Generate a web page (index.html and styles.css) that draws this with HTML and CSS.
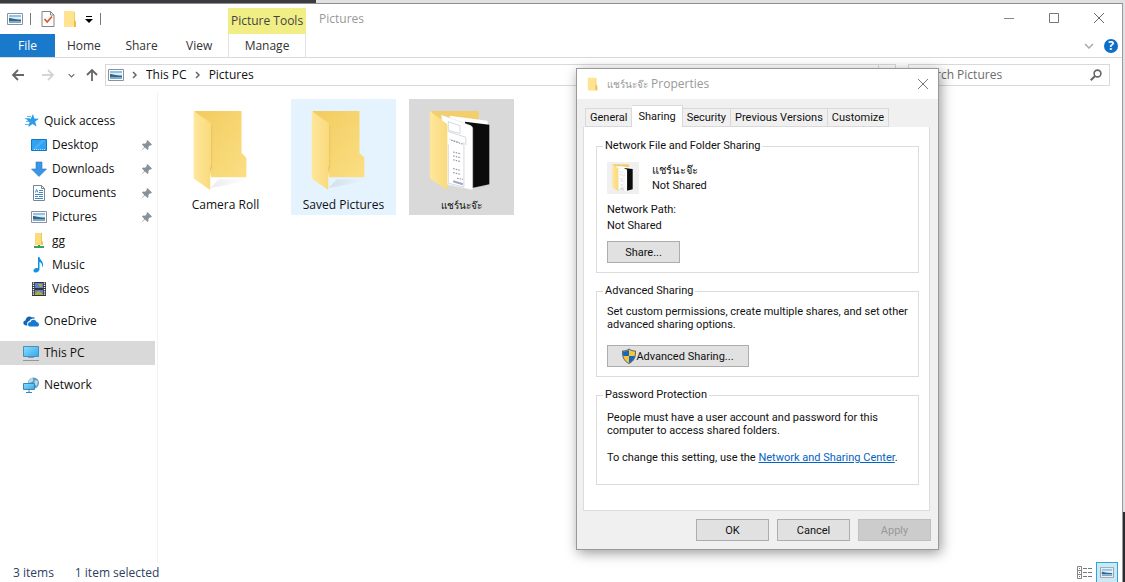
FILE: index.html
```html
<!DOCTYPE html>
<html lang="en">
<head>
<meta charset="utf-8">
<title>Pictures</title>
<link rel="stylesheet" href="styles.css">
</head>
<body>
<svg class="defs" aria-hidden="true">
  <defs>
    <linearGradient id="sky" x1="0" y1="0" x2="0" y2="1"><stop offset="0" stop-color="#7fb9ea"/><stop offset=".45" stop-color="#e3f2f4"/><stop offset=".55" stop-color="#3d6a83"/><stop offset="1" stop-color="#6ba0d2"/></linearGradient>
    <linearGradient id="back" x1="0" y1="0" x2="1" y2="1"><stop offset="0" stop-color="#f2cb5e"/><stop offset="1" stop-color="#fbdf84"/></linearGradient>
    <linearGradient id="front" x1="0" y1="0" x2="1" y2="0"><stop offset="0" stop-color="#ffe69b"/><stop offset="1" stop-color="#f9da7c"/></linearGradient>
    <linearGradient id="screen" x1="0" y1="0" x2="1" y2="1"><stop offset="0" stop-color="#8ddcff"/><stop offset="1" stop-color="#31a9ec"/></linearGradient>
    <linearGradient id="shade" x1="0" y1="0" x2="1" y2="0"><stop offset="0" stop-color="#000" stop-opacity=".22"/><stop offset="1" stop-color="#000" stop-opacity="0"/></linearGradient>
    <symbol id="i-picture" viewBox="0 0 16 12"><path fill="#fff" stroke="#8b9299" d="M.5.5h15v11H.5z"/><path fill="#8fc3ee" d="M2 2h12v3H2z"/><path fill="#dceff5" d="M2 4h12v3H2z"/><path fill="#3b667f" d="M2 5c3 0 5 1.500 12 1.500V8H2z"/><path fill="#78aad6" d="M2 8h12v2H2z"/></symbol>
    <symbol id="i-folder" viewBox="0 0 56 84"><path fill="url(#shade)" d="M17 80l9-9h26l3 1-22 5z" opacity=".35"/><path fill="url(#back)" d="M1 1h48v43l5 5v20H18L2 4z"/><path fill="url(#front)" d="M0 1l17 12q1 1 1 3v43l-1 3v20L1 71q-1-1-1-3z"/><path fill="#dcae42" opacity=".45" d="M18 16h1v43l-2 4v-4l1-2z"/></symbol>
    <symbol id="i-docs" viewBox="0 0 64 84"><path fill="url(#shade)" d="M44 80l12-3h8z"/><path fill="#f2cf6c" d="M1 1h49v30L20 66z"/><path fill="#fff" d="M20 6l39 5 1 6-20 40z"/><path fill="#0c0c0c" d="M36 12l25 3v61l-18 4z"/><path fill="#fff" stroke="#ddd" stroke-width=".5" d="M12 5l30 11q2 1 2 3v63L16 76z"/><path fill="none" stroke="#c3c8d0" stroke-width=".7" d="M19 12l12 4v8l-12-3zM19 22l18 6v8M19 35v40l16 4V33M20 30l10 3"/><path stroke="#8b9099" stroke-width="1.200" stroke-dasharray="1.500 1.200" fill="none" d="M24 43l8 2M24 47l8 2M24 51l8 2M24 60l8 2M24 64l8 2M28 70l6 1M22 31l12 4"/><path stroke="#9babc8" stroke-width="2" d="M24 73l10 3"/><path fill="url(#front)" d="M0 1l16 12q2 1 2 3v66L1 71q-1-1-1-3z"/></symbol>
    <symbol id="i-minifolder" viewBox="0 0 14 16"><path fill="#f3cc63" d="M3 1h9v10l1 1v4H3z"/><path fill="#ffe391" d="M1 0h10v16H1z"/><path fill="#e9bd50" d="M11 9h1l1 2v5h-2z"/></symbol>
    <symbol id="i-pin" viewBox="0 0 12 12"><path fill="#8a9299" d="M7 0l5 5-1.200 1-.8-.4L8 7.500l.2 2.200L7 11 4.300 8.300 0 12l3.600-4.400L1 5l1.300-1.200 2.200.2L6.500 2 6 1z"/></symbol>
    <symbol id="i-close" viewBox="0 0 12 12"><path fill="none" stroke="currentColor" d="M1 1l10 10M11 1L1 11"/></symbol>
    <symbol id="i-right" viewBox="0 0 6 8"><path fill="none" stroke="#666" stroke-width="1.500" d="M1 1l3 3-3 3"/></symbol>
    <symbol id="i-down" viewBox="0 0 10 6"><path fill="none" stroke="currentColor" stroke-width="1.500" d="M1 1l4 4 4-4"/></symbol>
    <symbol id="i-arrow" viewBox="0 0 14 12"><path fill="none" stroke="currentColor" stroke-width="1.800" d="M13 6H2M7 1L2 6l5 5"/></symbol>
  </defs>
</svg>

<div class="desktop">
  <main class="window">
    <header class="ribbon">
      <div class="quickbar">
        <svg class="pic" role="img" aria-label="Pictures"><use href="#i-picture"/></svg>
        <span class="rule"></span>
        <button class="plain" aria-label="Properties"><svg width="14" height="16" viewBox="0 0 14 16"><path fill="#fff" stroke="#858585" d="M1 .5h8.500L13 4v11.500H1z"/><path fill="none" stroke="#858585" d="M9.500.5V4H13"/><path fill="none" stroke="#dc5a2c" stroke-width="1.800" d="M3.500 8l2.700 3L11 5.500"/></svg></button>
        <button class="plain" aria-label="New folder"><svg width="14" height="16"><use href="#i-minifolder"/></svg></button>
        <button class="plain" aria-label="Customize Quick Access Toolbar"><svg width="8" height="7" viewBox="0 0 8 7"><path d="M1 0h6v1H1zM0 3h8L4 7z"/></svg></button>
        <span class="rule"></span>
      </div>
      <nav class="tabs">
        <button class="tab file">File</button>
        <button class="tab">Home</button>
        <button class="tab">Share</button>
        <button class="tab">View</button>
      </nav>
      <div class="context">
        <div class="context-name">Picture Tools</div>
        <button class="tab">Manage</button>
      </div>
      <div class="titlebar">
        <h1>Pictures</h1>
        <div class="controls">
          <button class="plain" aria-label="Minimize"><svg width="12" height="12" viewBox="0 0 12 12"><path stroke="#888" d="M1 6.500h10"/></svg></button>
          <button class="plain" aria-label="Maximize"><svg width="12" height="12" viewBox="0 0 12 12"><path fill="none" stroke="#777" d="M1.500 1.500h9v9h-9z"/></svg></button>
          <button class="plain" aria-label="Close"><svg width="12" height="12"><use href="#i-close"/></svg></button>
        </div>
      </div>
      <div class="ribbon-end">
        <button class="plain grey" aria-label="Expand the ribbon"><svg width="10" height="6"><use href="#i-down"/></svg></button>
        <button class="help" aria-label="Help">?</button>
      </div>
    </header>

    <div class="addressrow">
      <div class="arrows">
        <button class="plain" aria-label="Back"><svg width="14" height="12"><use href="#i-arrow"/></svg></button>
        <button class="plain off" aria-label="Forward"><svg width="14" height="12"><use href="#i-arrow" transform="rotate(180 7 6)"/></svg></button>
        <button class="plain" aria-label="Recent locations"><svg width="7" height="5"><use href="#i-down"/></svg></button>
        <button class="plain" aria-label="Up"><svg width="12" height="14" viewBox="0 0 12 14"><path fill="none" stroke="currentColor" stroke-width="1.800" d="M6 13V2M1 7l5-5 5 5"/></svg></button>
      </div>
      <div class="address">
        <svg class="pic"><use href="#i-picture"/></svg>
        <svg class="sep"><use href="#i-right"/></svg>
        <span>This PC</span>
        <svg class="sep"><use href="#i-right"/></svg>
        <span>Pictures</span>
        <button class="refresh" aria-label="Refresh"></button>
      </div>
      <label class="search">
        <input type="text" placeholder="Search Pictures" aria-label="Search Pictures">
        <svg width="12" height="12" viewBox="0 0 12 12"><circle cx="7.500" cy="4.500" r="3.400" fill="none" stroke="#666" stroke-width="1.600"/><path stroke="#666" stroke-width="2" d="M5 7L.8 11.200"/></svg>
      </label>
    </div>

    <div class="body">
      <nav class="tree">
        <ul>
          <li><svg class="ico" viewBox="0 0 16 16"><path fill="#2d9be8" d="M10 1l1.300 4.500 4.700.2-3.800 2.900 1.300 4.900-4-2.600-4.200 3 1.300-5L3 6.200l4.700-.5z"/><path stroke="#67b7ee" d="M4 3.500h4M2 5.500h5M3 8.500h3M2 11.500h4"/></svg>Quick access</li>
          <li class="sub"><svg class="ico" viewBox="0 0 16 16"><path fill="#2ea2f3" stroke="#1677bf" d="M.5 2.500h15v11H.5z"/><path fill="#5bbcff" opacity=".5" d="M11 3h4L4 13H1z"/><path stroke="#bfe4ff" stroke-dasharray="1 1" d="M3 12.500h11"/></svg>Desktop<svg class="pin"><use href="#i-pin"/></svg></li>
          <li class="sub"><svg class="ico" viewBox="0 0 16 16"><path fill="#3b94e6" stroke="#2b79c5" stroke-width=".6" d="M5 1h6v7h4.500L8 15.500.5 8H5z"/></svg>Downloads<svg class="pin"><use href="#i-pin"/></svg></li>
          <li class="sub"><svg class="ico" viewBox="0 0 16 16"><path fill="#fff" stroke="#7b858d" d="M2.500.5h8l3 3v12h-11z"/><path fill="none" stroke="#7b858d" d="M10.500.5v3h3"/><path fill="none" stroke="#3e89c8" d="M8 5.500h4M8 7.500h4M4 9.500h8M4 11.500h3M8 11.500h4M4 13.500h8M4.500 7.500l1-3 1.500 3"/></svg>Documents<svg class="pin"><use href="#i-pin"/></svg></li>
          <li class="sub"><svg class="ico" viewBox="0 0 16 16"><use href="#i-picture" y="2" width="16" height="12"/></svg>Pictures<svg class="pin"><use href="#i-pin"/></svg></li>
          <li class="sub"><svg class="ico" viewBox="0 0 16 16"><path fill="#f0c650" d="M4 0h7v8l1 1v3H4z"/><path fill="#fbdc7c" d="M4 0h6v12H4z"/><path fill="#38a357" d="M7 12h2v1h4v2H3v-2h4z"/></svg>gg</li>
          <li class="sub"><svg class="ico" viewBox="0 0 16 16"><path fill="#1391e5" d="M7 0h1.500c.3 3 4 4 3.500 8.500-.3 1-.8 1.500-1 1.500.5-3-1-4.500-2.500-5V12c0 2.500-2.500 4-4.500 3.500S2 12.500 4 11.500c1-.5 2-.5 3-.2z"/></svg>Music</li>
          <li class="sub"><svg class="ico" viewBox="0 0 16 16"><path fill="#30343a" d="M1 1h14v14H1z"/><path fill="#5b82cb" d="M4 2h8v5H4zM4 9h8v5H4z"/><path fill="#b2a842" d="M7 3h4v3H9zM4 12l4-2 4 3v1H4z"/><path stroke="#fff" stroke-width="1.400" stroke-dasharray="1.200 1" d="M2.500 1.500v13M13.500 1.500v13"/></svg>Videos</li>
          <li class="top"><svg class="ico" viewBox="0 0 16 16"><path fill="#1165b4" d="M4.500 12.500H3C-.5 12-.5 8 2.500 7.500 2.500 4 6.500 2 9 4.500c1-.5 2.500 0 3 1.200-3-.7-5 .6-5.500 2.300-2 .3-3 2.500-2 4.500z"/><path fill="#167bd0" d="M7 13.500c-3-.3-2.500-4.500.5-4.500 1-3 5-3 6 0C17 9.500 16.500 13.500 14 13.500z"/></svg>OneDrive</li>
          <li class="top current"><svg class="ico" viewBox="0 0 16 16"><path fill="url(#screen)" stroke="#4b8fb8" d="M.5 1.500h15v10H.5z"/><path stroke="#8a9aa5" d="M5 12.500h6M0 15.500h16"/></svg>This PC</li>
          <li class="top"><svg class="ico" viewBox="0 0 16 16"><circle cx="10.500" cy="6" r="5.500" fill="#5f9cc4"/><path fill="#b9dbea" d="M8 1q3 0 2 3L7 6 5 5zM12 3l3 1-1 5-3-2z"/><path fill="url(#screen)" stroke="#3c86b4" d="M.5 6.500h11v6H.5z"/><path stroke="#3c86b4" d="M3 15.500h6M6 13v2"/></svg>Network</li>
        </ul>
      </nav>
      <section class="files">
        <figure class="tile"><svg class="folder"><use href="#i-folder"/></svg><figcaption>Camera Roll</figcaption></figure>
        <figure class="tile hover"><svg class="folder"><use href="#i-folder"/></svg><figcaption>Saved Pictures</figcaption></figure>
        <figure class="tile chosen"><svg class="folder wide"><use href="#i-docs"/></svg><figcaption><span class="thai">แชร์นะจ๊ะ</span></figcaption></figure>
      </section>
    </div>

    <footer class="status">
      <span>3 items</span>
      <span>1 item selected</span>
      <div class="views">
        <button class="view" aria-label="Details"><svg width="16" height="14" viewBox="0 0 16 14"><path fill="none" stroke="#858585" d="M.5.500h4v12h-4zM.5 4.500h4M.5 8.500h4"/><path stroke="#777" stroke-dasharray="4 1" d="M6 2.500h10M6 6.500h10M6 10.500h10"/><path stroke="#777" d="M2 2.500h1M2 6.500h1M2 10.500h1"/></svg></button>
        <button class="view on" aria-label="Large icons"><svg width="14" height="11"><use href="#i-picture"/></svg></button>
      </div>
    </footer>
  </main>

  <div class="dialog" role="dialog" aria-labelledby="dlg">
    <header class="dlg-head">
      <svg width="11" height="14"><use href="#i-minifolder"/></svg>
      <h2 id="dlg"><span class="thai">แชร์นะจ๊ะ</span> Properties</h2>
      <button class="plain" aria-label="Close dialog"><svg width="12" height="12"><use href="#i-close"/></svg></button>
    </header>
    <div class="dlg-tabs" role="tablist">
      <button role="tab">General</button>
      <button role="tab" class="active" aria-selected="true">Sharing</button>
      <button role="tab">Security</button>
      <button role="tab">Previous Versions</button>
      <button role="tab">Customize</button>
    </div>
    <div class="sheet">
      <fieldset class="net">
        <legend>Network File and Folder Sharing</legend>
        <div class="share">
          <span class="thumb"><svg width="22" height="28"><use href="#i-docs"/></svg></span>
          <div><div>แชร์นะจ๊ะ</div><div>Not Shared</div></div>
        </div>
        <div class="path"><div>Network Path:</div><div>Not Shared</div></div>
        <button class="push">Share...</button>
      </fieldset>
      <fieldset class="adv">
        <legend>Advanced Sharing</legend>
        <p>Set custom permissions, create multiple shares, and set other advanced sharing options.</p>
        <button class="push long"><svg width="14" height="16" viewBox="0 0 14 16"><path fill="#f7c53c" stroke="#51616b" d="M7 1c2 1.500 4 2 6.500 2 .3 5-1 10-6.500 12.500C1.500 13 .2 8 .5 3 3 3 5 2.500 7 1z"/><path fill="#1668ba" d="M7 2v6H1.200Q1 6 1 3.500 4 3.500 7 2zM7 8h6Q12 13 7 15z"/></svg>Advanced Sharing...</button>
      </fieldset>
      <fieldset class="pwd">
        <legend>Password Protection</legend>
        <p>People must have a user account and password for this computer to access shared folders.</p>
        <p>To change this setting, use the <a href="#">Network and Sharing Center</a>.</p>
      </fieldset>
    </div>
    <div class="dlg-foot">
      <button class="push">OK</button>
      <button class="push">Cancel</button>
      <button class="push" disabled>Apply</button>
    </div>
  </div>
</div>
</body>
</html>
```
FILE: styles.css
```css
* { box-sizing: border-box; }
body { margin: 0; font: 12px/16px "Open Sans", "Noto Sans", sans-serif; color: #111; }
button, input { font: inherit; color: inherit; }
h1, h2, p, ul, figure { margin: 0; padding: 0; font-weight: 400; font-size: inherit; }
ul { list-style: none; }
svg { flex: none; }
.defs { position: absolute; width: 0; height: 0; }
.thai { font-size: 10px; }

.desktop {
  position: relative;
  display: flex;
  height: 100vh;
  padding: 3px 2px 0 0;
  overflow: hidden;
  background:
    linear-gradient(#3b3c40, #3b3c40) 0 0 / 316px 3px no-repeat,
    linear-gradient(#2a2c32, #2a2c32) right bottom / 2px 70px no-repeat,
    #e1e1e3;
}
.window {
  flex: 1;
  display: flex;
  flex-direction: column;
  min-width: 0;
  background: #fff;
  border-top: 1px solid #8f8f8f;
  border-right: 1px solid #999;
}
.plain {
  display: inline-flex;
  align-items: center;
  justify-content: center;
  padding: 0;
  border: 0;
  background: none;
  color: #666;
}

/* Title bar and ribbon tabs */
.ribbon {
  display: grid;
  grid-template-columns: 228px 78px 1fr;
  grid-template-rows: 30px 23px;
  border-bottom: 1px solid #d9dadb;
}
.quickbar { display: flex; align-items: center; padding-left: 7px; }
.quickbar .rule { width: 1px; height: 12px; margin: 0 10px 0 7px; background: #777; }
.quickbar .plain + .plain { margin-left: 8px; }
.pic { width: 16px; height: 12px; }
.tabs { grid-row: 2; display: flex; }
.tab { flex: 1; padding: 0; border: 0; background: none; color: #333; }
.tab.file { flex: none; width: 55px; background: #1979ca; color: #fff; }
.context { grid-row: 1 / 3; grid-column: 2; display: flex; flex-direction: column; padding-top: 4px; }
.context-name { height: 26px; line-height: 26px; text-align: center; background: #f0ee85; color: #444; white-space: nowrap; }
.context .tab { border: solid #e2e2e2; border-width: 0 1px; }
.titlebar { grid-column: 3; display: flex; align-items: center; justify-content: space-between; padding-left: 13px; }
.titlebar h1 { color: #999; }
.controls { display: flex; margin-right: 1px; }
.controls .plain { width: 45px; height: 30px; padding-bottom: 2px; }
.ribbon-end { grid-column: 3; grid-row: 2; display: flex; align-items: center; justify-content: flex-end; gap: 10px; padding-right: 4px; }
.grey { color: #aaa; }
.help { width: 14px; height: 14px; padding: 0; border: 0; border-radius: 50%; background: #0b6fc9; color: #fff; font-weight: 700; line-height: 14px; }

/* Address row */
.addressrow { display: flex; align-items: center; height: 34px; padding-right: 12px; }
.arrows { display: flex; align-items: center; width: 105px; padding-left: 11px; }
.arrows .plain { width: 14px; margin-right: 16px; }
.arrows .off { color: #d4d4d4; }
.arrows .off + .plain { width: 8px; margin: 0 11px 0 -4px; }
.arrows .plain:last-child { width: 12px; margin: 0; }
.address { flex: 1; display: flex; align-items: center; height: 22px; padding-left: 2px; border: 1px solid #d9d9d9; }
.sep { width: 6px; height: 8px; margin: 0 8px; }
.refresh { width: 17px; height: 20px; margin-left: auto; padding: 0; border: 0; border-left: 1px solid #d9d9d9; background: none; }
.search { display: flex; align-items: center; width: 202px; height: 22px; margin-left: 12px; padding: 0 7px; border: 1px solid #d9d9d9; }
.search input { flex: 1; min-width: 0; padding: 0; border: 0; outline: 0; background: none; }
.search input::placeholder { color: #6d6d6d; opacity: 1; }

/* Folder tree and files */
.body { flex: 1; display: flex; min-height: 0; }
.tree { width: 158px; padding: 17px 2px 0 0; border-right: 1px solid #f3f3f3; }
.tree li { display: flex; align-items: center; gap: 5px; height: 24px; padding: 0 3px 0 23px; }
.tree .sub { padding-left: 31px; }
.tree .top { margin-top: 8px; }
.tree .current { background: #d9d9d9; }
.ico { width: 16px; height: 16px; }
.pin { width: 11px; height: 11px; margin-left: auto; }
.files { display: flex; align-items: flex-start; gap: 13px; padding: 7px 0 0 15px; }
.tile { width: 105px; height: 116px; padding: 11px 0 0 20px; }
.tile figcaption { margin: 5px 0 0 -20px; text-align: center; white-space: nowrap; }
.folder { display: block; width: 56px; height: 82px; }
.folder.wide { width: 64px; }
.hover { background: #e5f3ff; }
.chosen { background: #d9d9d9; }

/* Status bar */
.status { display: flex; align-items: center; height: 19px; padding: 0 4px 0 13px; gap: 21px; color: #2c3e63; }
.views { display: flex; margin-left: auto; }
.view { display: flex; align-items: center; justify-content: center; width: 22px; height: 22px; padding: 0; border: 1px solid transparent; background: none; }
.view.on { border-color: #2ea6d8; background: #cbe8f6; }

/* Properties dialog */
.dialog {
  position: absolute;
  top: 68px;
  left: 576px;
  width: 363px;
  padding-bottom: 8px;
  border: 1px solid #999;
  background: #f0f0f0;
  box-shadow: 2px 3px 12px rgba(0, 0, 0, .4);
  font: 11px/13px Roboto, "Liberation Sans", Arial, sans-serif;
}
.dlg-head { display: flex; align-items: center; gap: 9px; height: 30px; padding: 0 9px 0 10px; background: #fff; color: #999; font: 12px/16px "Open Sans", "Noto Sans", sans-serif; }
.dlg-head .plain { margin-left: auto; color: #777; }
.dlg-tabs { display: flex; align-items: flex-end; height: 28px; padding: 0 52px 0 8px; }
.dlg-tabs button { flex: auto; height: 19px; padding: 0 4px; border: 1px solid #d9d9d9; border-left-width: 0; background: #f0f0f0; color: #111; white-space: nowrap; }
.dlg-tabs button:first-child { border-left-width: 1px; }
.dlg-tabs .active { height: 22px; padding: 0 6px; border-bottom: 0; background: #fff; }
.sheet { margin: 0 8px 0 6px; padding: 12px 10px 25px 12px; border: 1px solid #dcdcdc; border-top: 0; background: #fff; }
fieldset { min-width: 0; margin: 0 0 11px; padding: 0 10px 9px; border: 1px solid #dcdcdc; }
fieldset:last-child { margin: 0; }
legend { margin-left: -4px; padding: 0 2px; line-height: 14px; }
.share { display: flex; align-items: center; gap: 13px; padding-top: 9px; line-height: 15px; }
.thumb { display: flex; align-items: center; justify-content: center; width: 32px; height: 32px; background: #f0f0f0; }
.path { padding: 8px 0 7px; line-height: 16px; }
.push { display: inline-flex; align-items: center; justify-content: center; width: 73px; height: 22px; margin: 0; padding: 0; border: 1px solid #adadad; background: #e1e1e1; color: #111; vertical-align: top; }
.push.long { width: 142px; }
.push:disabled { background: #ccc; border-color: #bfbfbf; color: #999; }
.adv p { padding: 7px 0 14px; }
.pwd { padding-bottom: 20px; }
.pwd p { padding-top: 9px; }
.pwd p + p { padding-top: 14px; }
a { color: #0563c1; }
.dlg-foot { display: flex; justify-content: flex-end; gap: 8px; padding: 8px 7px 0; }
```
